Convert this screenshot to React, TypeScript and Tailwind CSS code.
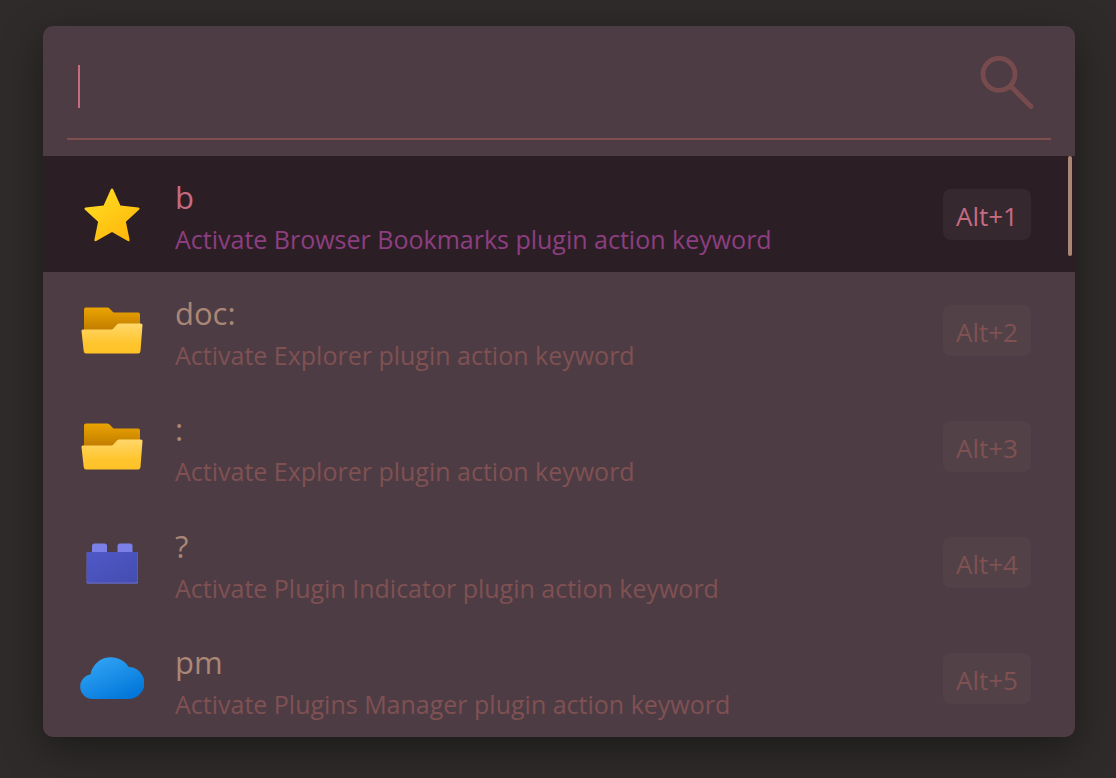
import { useState } from "react";
import type { ReactNode } from "react";

function StarIcon() {
  return (
    <svg viewBox="0 0 64 64" className="size-16" aria-hidden="true">
      <defs>
        <linearGradient id="star" x1="0.1" y1="0.1" x2="0.8" y2="1">
          <stop offset="0" stopColor="#ffdc22" />
          <stop offset="1" stopColor="#ffb60a" />
        </linearGradient>
      </defs>
      <path
        transform="translate(0 2)"
        d="M31 5.1Q32 3.8 33 5.1L40.4 21.6L58.4 23.5Q60.4 24 59.2 25.5L45.9 37.8L49.6 55.7Q49.8 57.8 47.8 57.1L32 48L16.2 57.1Q14.2 57.8 14.4 55.7L18.1 37.8L4.8 25.5Q3.6 24 5.6 23.5L23.6 21.6Z"
        fill="url(#star)"
      />
    </svg>
  );
}

function FolderIcon() {
  return (
    <svg viewBox="0 0 64 64" className="size-16" aria-hidden="true">
      <defs>
        <linearGradient id="folderBack" x1="0" y1="0" x2="0" y2="1">
          <stop offset="0" stopColor="#eba400" />
          <stop offset="0.55" stopColor="#c27d00" />
        </linearGradient>
        <linearGradient id="folderFront" x1="0" y1="0" x2="0" y2="1">
          <stop offset="0" stopColor="#ffd76b" />
          <stop offset="0.65" stopColor="#ffc52e" />
          <stop offset="1" stopColor="#ffc327" />
        </linearGradient>
      </defs>
      <path
        d="M4 11.5Q4 9.5 6 9.5H27Q28.5 9.5 29.5 10.5L33.5 14.5H58Q60 14.5 60 16.5V50H4Z"
        fill="url(#folderBack)"
      />
      <path
        d="M1.5 33Q1.3 31.5 2.8 31.5H31.5Q32.5 31.5 33.2 30.7L36.8 26.8Q38 25.5 39.5 25.5H61Q62.6 25.5 62.5 27L60.5 53Q60.2 55.5 58 55.5H6Q4 55.5 3.7 53Z"
        fill="url(#folderFront)"
      />
    </svg>
  );
}

function BrickIcon() {
  return (
    <svg viewBox="0 0 64 64" className="size-16" aria-hidden="true">
      <defs>
        <linearGradient id="brick" x1="0" y1="0" x2="1" y2="1">
          <stop offset="0" stopColor="#5058c9" />
          <stop offset="1" stopColor="#444db0" />
        </linearGradient>
      </defs>
      <rect x="12" y="12.5" width="15" height="14" rx="2.5" fill="#7a80e8" />
      <rect x="37.5" y="12.5" width="15" height="14" rx="2.5" fill="#7a80e8" />
      <rect x="6.5" y="21" width="51.5" height="31.8" rx="1.5" fill="#6669c4" />
      <rect x="7" y="21" width="50.5" height="30.6" rx="1.5" fill="url(#brick)" />
    </svg>
  );
}

function CloudIcon() {
  return (
    <svg viewBox="0 0 64 64" className="size-16" aria-hidden="true">
      <defs>
        <linearGradient id="cloud" x1="0.15" y1="0.05" x2="0.8" y2="1">
          <stop offset="0" stopColor="#32a5f5" />
          <stop offset="1" stopColor="#0074d8" />
        </linearGradient>
      </defs>
      <path
        d="M12.5 52A12.4 12.4 0 0 1 10.4 27.4A21 21 0 0 1 48.8 20A16 16 0 0 1 48 52Z"
        fill="url(#cloud)"
      />
    </svg>
  );
}

function SearchIcon() {
  return (
    <svg
      viewBox="0 0 56 56"
      className="size-14 shrink-0"
      fill="none"
      stroke="#774b4d"
      strokeWidth="4.8"
      strokeLinecap="round"
      aria-hidden="true"
    >
      <circle cx="20" cy="20.3" r="16" />
      <path d="M32 32.5L52 52.5" />
    </svg>
  );
}

type Result = { title: string; subtitle: string; hotkey: string; icon: ReactNode };

const results: Result[] = [
  { title: "b", subtitle: "Activate Browser Bookmarks plugin action keyword", hotkey: "Alt+1", icon: <StarIcon /> },
  { title: "doc:", subtitle: "Activate Explorer plugin action keyword", hotkey: "Alt+2", icon: <FolderIcon /> },
  { title: ":", subtitle: "Activate Explorer plugin action keyword", hotkey: "Alt+3", icon: <FolderIcon /> },
  { title: "?", subtitle: "Activate Plugin Indicator plugin action keyword", hotkey: "Alt+4", icon: <BrickIcon /> },
  { title: "pm", subtitle: "Activate Plugins Manager plugin action keyword", hotkey: "Alt+5", icon: <CloudIcon /> },
];

export default function App() {
  const [query, setQuery] = useState("");
  const [selected, setSelected] = useState(0);

  return (
    <main className="min-h-screen bg-[#2f2b2b] pt-[26px] pb-10 pl-[43px] pr-[41px] font-['Open_Sans','Noto_Sans',sans-serif]">
      <div className="overflow-hidden rounded-[10px] bg-[#4e3c45] shadow-[0_12px_40px_rgba(0,0,0,0.4)]">
        <div className="px-6 pb-4">
          <div className="flex h-[114px] items-center border-b-2 border-[#7f4f50] pr-4 pl-[11px]">
            {query === "" && <span className="mt-2 h-[43px] w-0.5 shrink-0 bg-[#c76b80]" aria-hidden="true" />}
            <input
              type="text"
              aria-label="Search"
              value={query}
              onChange={(e) => setQuery(e.target.value)}
              className="min-w-0 flex-1 bg-transparent text-3xl text-[#c76b80] caret-[#c76b80] outline-none"
            />
            <SearchIcon />
          </div>
        </div>
        <div className="relative">
          <ul className="grid min-h-[581px] auto-rows-fr">
            {results.map((r, i) => {
              const active = i === selected;
              return (
                <li key={r.hotkey} className="grid">
                  <button
                    type="button"
                    onClick={() => setSelected(i)}
                    className={`flex items-center pr-11 pl-[37px] text-left ${active ? "bg-[#2c1e25]" : ""}`}
                  >
                    {r.icon}
                    <span className="ml-[31px] flex min-w-0 flex-1 flex-col pt-2">
                      <span className={`text-[31px] leading-[42px] ${active ? "text-[#c76b80]" : "text-[#aa8775]"}`}>
                        {r.title}
                      </span>
                      <span
                        className={`truncate text-[25px] leading-[42px] ${active ? "text-[#8c3f80]" : "text-[#7f5152]"}`}
                      >
                        {r.subtitle}
                      </span>
                    </span>
                    <kbd
                      className={`flex h-[51px] w-[88px] items-center justify-center rounded-lg pt-1 font-['Open_Sans','Noto_Sans',sans-serif] text-[26px] ${
                        active ? "bg-[#35282e] text-[#c76b80]" : "bg-[#524248] text-[#7f5152]"
                      }`}
                    >
                      {r.hotkey}
                    </kbd>
                  </button>
                </li>
              );
            })}
          </ul>
          <div className="absolute top-0 right-[3px] h-[100px] w-1 rounded-full bg-[#aa8775]" aria-hidden="true" />
        </div>
      </div>
    </main>
  );
}
